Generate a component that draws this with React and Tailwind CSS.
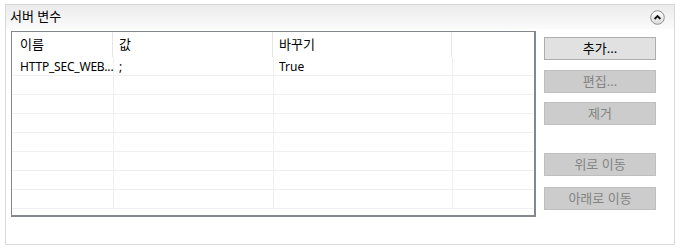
import React from "react";

const font = { fontFamily: '"Noto Sans", "Noto Sans CJK KR", sans-serif' };

const rows = [
  ["HTTP_SEC_WEB...", ";", "True"],
  ["", "", ""],
  ["", "", ""],
  ["", "", ""],
  ["", "", ""],
  ["", "", ""],
  ["", "", ""],
  ["", "", ""],
];

const CollapseIcon = () => (
  <svg width="15" height="15" viewBox="0 0 15 15">
    <defs>
      <linearGradient id="cg" x1="0" y1="0" x2="0" y2="1">
        <stop offset="0" stopColor="#ffffff" />
        <stop offset="1" stopColor="#dcdcdc" />
      </linearGradient>
    </defs>
    <circle cx="7.5" cy="7.5" r="6.8" fill="url(#cg)" stroke="#8f8f8f" strokeWidth="1" />
    <path d="M4.6 9 L7.5 6.1 L10.4 9" fill="none" stroke="#111" strokeWidth="1.8" />
  </svg>
);

const Btn = ({ label, disabled, className }) => (
  <button
    className={
      "block w-[112px] h-[23px] border text-[13px] leading-none " +
      (disabled
        ? "bg-[#cccccc] border-[#bfbfbf] text-[#838383] "
        : "bg-[#e1e1e1] border-[#adadad] text-black ") +
      className
    }
  >
    {label}
  </button>
);

export default function App() {
  return (
    <div className="w-[680px] h-[251px] bg-white pt-[4px] pl-[5px]" style={font}>
      <div className="w-[670px] h-[241px] border border-[#d9d9d9]">
        <div className="h-[24px] flex items-center justify-between pl-[4px] pr-[9px] bg-gradient-to-b from-[#ebebeb] to-[#fbfbfb]">
          <span className="text-[13px] text-black">서버 변수</span>
          <CollapseIcon />
        </div>
        <div className="flex mt-[2px] ml-[5px]">
          <div className="w-[525px] h-[186px] border border-[#828790] border-r-2 border-b-2 overflow-hidden bg-white">
            <div className="flex h-[25px] text-[13px] text-black">
              <div className="w-[101px] pl-[8px] pt-[3px] border-r border-[#e5e5e5]">이름</div>
              <div className="w-[160px] pl-[6px] pt-[3px] border-r border-[#e5e5e5]">값</div>
              <div className="w-[179px] pl-[6px] pt-[3px] border-r border-[#e5e5e5]">바꾸기</div>
              <div className="flex-1" />
            </div>
            {rows.map((r, i) => (
              <div key={i} className="flex h-[19px] border-b border-[#f0f0f0] text-[12px] text-black">
                <div className="w-[102px] pl-[8px] leading-[19px] border-r border-[#f0f0f0] tracking-[-0.2px]">{r[0]}</div>
                <div className="w-[160px] pl-[5px] leading-[19px] border-r border-[#f0f0f0]">{r[1]}</div>
                <div className="w-[179px] pl-[5px] leading-[19px] border-r border-[#f0f0f0]">{r[2]}</div>
                <div className="flex-1" />
              </div>
            ))}
          </div>
          <div className="ml-[8px] pt-[6px]">
            <Btn label="추가..." />
            <Btn label="편집..." disabled className="mt-[10px]" />
            <Btn label="제거" disabled className="mt-[9px]" />
            <Btn label="위로 이동" disabled className="mt-[28px]" />
            <Btn label="아래로 이동" disabled className="mt-[11px]" />
          </div>
        </div>
      </div>
    </div>
  );
}
